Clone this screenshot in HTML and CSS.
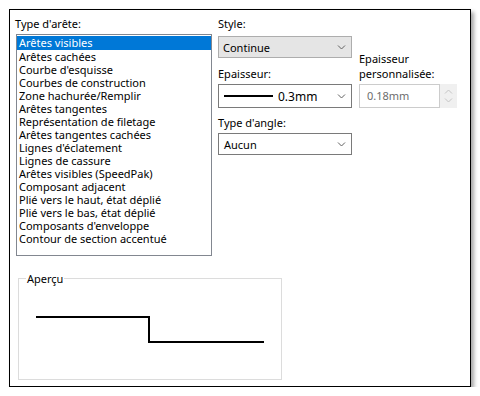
FILE: index.html
```html
<!DOCTYPE html>
<html lang="fr">
<head>
  <meta charset="UTF-8">
  <title>Type d'arête</title>
  <link rel="stylesheet" href="styles.css">
</head>
<body>
  <div class="dialog">
    <div class="top">
      <div class="edges">
        <div class="label">Type d'arête:</div>
        <ul class="listbox">
          <li class="selected">Arêtes visibles</li>
          <li>Arêtes cachées</li>
          <li>Courbe d'esquisse</li>
          <li>Courbes de construction</li>
          <li>Zone hachurée/Remplir</li>
          <li>Arêtes tangentes</li>
          <li>Représentation de filetage</li>
          <li>Arêtes tangentes cachées</li>
          <li>Lignes d'éclatement</li>
          <li>Lignes de cassure</li>
          <li>Arêtes visibles (SpeedPak)</li>
          <li>Composant adjacent</li>
          <li>Plié vers le haut, état déplié</li>
          <li>Plié vers le bas, état déplié</li>
          <li>Composants d'enveloppe</li>
          <li>Contour de section accentué</li>
        </ul>
      </div>

      <div class="props">
        <div class="label style-label">Style:</div>
        <div class="combo combo-gray style-combo">
          <span>Continue</span>
          <svg class="chevron" width="9" height="5" viewBox="0 0 9 5"><path d="M1 0.5 L4.5 4 L8 0.5" fill="none" stroke="#606060" stroke-width="1"/></svg>
        </div>

        <div class="label thick-label">Epaisseur:</div>
        <div class="combo thick-combo">
          <span class="sample"></span>
          <span class="thick-value">0.3mm</span>
          <svg class="chevron" width="9" height="5" viewBox="0 0 9 5"><path d="M1 0.5 L4.5 4 L8 0.5" fill="none" stroke="#606060" stroke-width="1"/></svg>
        </div>

        <div class="label custom-label">Epaisseur<br>personnalisée:</div>
        <div class="custom">
          <div class="custom-input">0.18mm</div>
          <div class="spinner">
            <svg width="9" height="5" viewBox="0 0 9 5"><path d="M1 4.5 L4.5 1 L8 4.5" fill="none" stroke="#c4c4c4" stroke-width="1"/></svg>
            <svg width="9" height="5" viewBox="0 0 9 5"><path d="M1 0.5 L4.5 4 L8 0.5" fill="none" stroke="#c4c4c4" stroke-width="1"/></svg>
          </div>
        </div>

        <div class="label angle-label">Type d'angle:</div>
        <div class="combo angle-combo">
          <span>Aucun</span>
          <svg class="chevron" width="9" height="5" viewBox="0 0 9 5"><path d="M1 0.5 L4.5 4 L8 0.5" fill="none" stroke="#606060" stroke-width="1"/></svg>
        </div>
      </div>
    </div>

    <fieldset class="preview">
      <legend>Aperçu</legend>
      <svg width="262" height="90" viewBox="0 0 262 90">
        <polyline points="17,32 130,32 130,57 245,57" fill="none" stroke="#000" stroke-width="2"/>
      </svg>
    </fieldset>
  </div>
</body>
</html>
```

FILE: styles.css
```css
body {
  margin: 0;
  background: #fff;
  font-family: "Noto Sans", "Open Sans", sans-serif;
  font-size: 11px;
  color: #000;
}

.dialog {
  margin: 9px 0 0 9px;
  width: 460px;
  height: 376px;
  border: 1px solid #000;
  box-shadow: 3px 3px 4px rgba(0, 0, 0, 0.35);
  box-sizing: content-box;
}

.top {
  display: flex;
  padding: 6px 0 0 5px;
}

.label {
  line-height: 15px;
  white-space: nowrap;
}

.edges {
  width: 203px;
}

.edges .label {
  margin-bottom: 3px;
}

.listbox {
  list-style: none;
  margin: 0 0 0 1px;
  padding: 1px 0 0 0;
  width: 196px;
  height: 222px;
  border: 1px solid #828790;
  box-sizing: border-box;
}

.listbox li {
  height: 13px;
  line-height: 13px;
  padding-left: 2px;
  white-space: nowrap;
}

.listbox li.selected {
  background: #0078d7;
  color: #fff;
  height: 14px;
}

.props {
  display: grid;
  grid-template-columns: 134px 98px;
  grid-template-rows: 20px 22px 26px 24px 25px 22px;
  column-gap: 7px;
}

.combo {
  display: flex;
  align-items: center;
  border: 1px solid #7a7a7a;
  background: #fff;
  padding: 0 0 0 5px;
  box-sizing: border-box;
}

.combo-gray {
  background: #e5e5e5;
  border-color: #adadad;
  padding-left: 4px;
}

.chevron {
  margin-left: auto;
  margin-right: 5px;
}

.style-label { grid-column: 1; grid-row: 1; }
.style-combo { grid-column: 1; grid-row: 2; }
.thick-label { grid-column: 1; grid-row: 3; align-self: end; margin-bottom: 3px; }
.thick-combo { grid-column: 1; grid-row: 4; }
.custom-label { grid-column: 2; grid-row: 2 / 4; align-self: end; margin-bottom: 3px; }
.custom { grid-column: 2; grid-row: 4; display: flex; }
.angle-label { grid-column: 1; grid-row: 5; align-self: end; margin-bottom: 3px; }
.angle-combo { grid-column: 1; grid-row: 6; }

.sample {
  display: block;
  width: 49px;
  height: 2px;
  background: #000;
  margin-right: 5px;
}

.thick-value {
  font-size: 12px;
}

.custom-input {
  width: 81px;
  border: 1px solid #cccccc;
  color: #6d6d6d;
  padding: 3px 0 0 7px;
  box-sizing: border-box;
  line-height: 15px;
}

.spinner {
  width: 17px;
  background: #f0f0f0;
  display: flex;
  flex-direction: column;
  align-items: center;
  justify-content: center;
  gap: 4px;
}

.preview {
  margin: 16px 0 0 8px;
  padding: 0;
  width: 263px;
  height: 108px;
  border: 1px solid #dcdcdc;
  box-sizing: border-box;
}

.preview legend {
  padding: 0 1px;
  margin-left: 7px;
  line-height: 13px;
}

.preview svg {
  display: block;
}
```
